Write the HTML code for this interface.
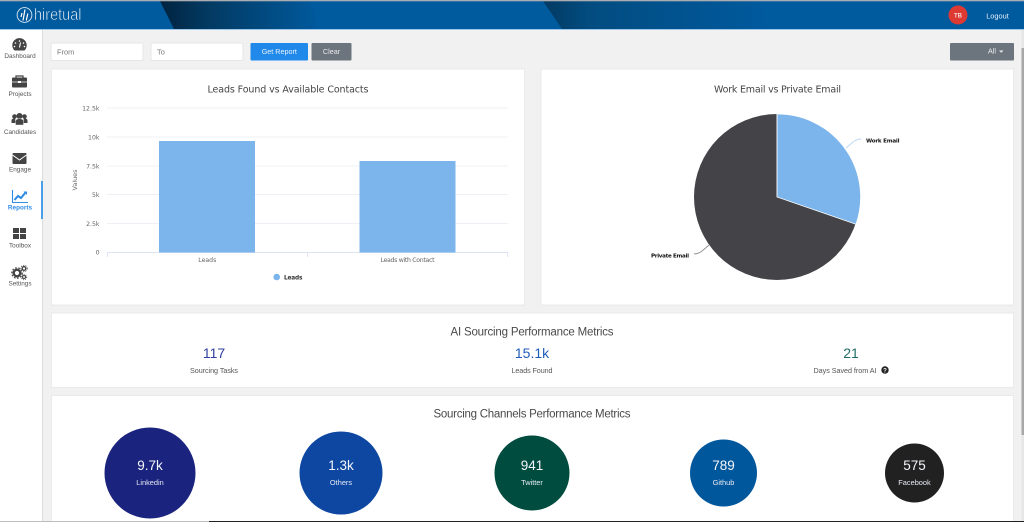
<!DOCTYPE html>
<html>
<head>
<meta charset="utf-8">
<title>Hiretual Reports</title>
<style>
html,body{margin:0;padding:0;width:1024px;height:522px;overflow:hidden;background:#f1f1f1}
svg{display:block;filter:blur(.38px)}
text{font-family:"Liberation Sans",sans-serif}
.d{font-family:"DejaVu Sans",sans-serif}
</style>
</head>
<body>
<svg width="1024" height="522" viewBox="0 0 1024 522" xmlns="http://www.w3.org/2000/svg">
<defs>
<linearGradient id="w1" x1="0" x2="1" y1="0" y2="0"><stop offset="0" stop-color="#01233f"/><stop offset=".3" stop-color="#023a62"/><stop offset="1" stop-color="#005a9e"/></linearGradient>
<linearGradient id="w2" x1="0" x2="1" y1="0" y2="0"><stop offset="0" stop-color="#033a62"/><stop offset=".2" stop-color="#024c80"/><stop offset="1" stop-color="#005a9e"/></linearGradient>
</defs>
<rect width="1024" height="522" fill="#f1f1f1"/>

<!-- header -->
<rect width="1024" height="29" fill="#005a9e"/>
<polygon points="160,1 310,1 320,29 174,29" fill="url(#w1)"/>
<polygon points="543,1 760,1 770,29 562,29" fill="url(#w2)"/>
<rect width="1024" height="1.3" fill="#a9adb1"/>
<rect y="29" width="1024" height="1" fill="#9cc6ea"/>
<circle cx="24.500" cy="15" r="7.400" fill="none" stroke="#dfeaf4" stroke-width=".9"/>
<path d="M25 9.500L23 20.500M27.800 13.500L26.300 20.500M22 13L21 17" fill="none" stroke="#fff" stroke-width="1.200"/>
<text x="34" y="20" font-size="17" fill="#f2f7fb" stroke="#005a9e" stroke-width=".55" paint-order="normal" textLength="47.500" lengthAdjust="spacingAndGlyphs">hiretual</text>
<circle cx="958" cy="15" r="9.500" fill="#dd3a33"/>
<text x="958" y="17.500" font-size="6" font-weight="bold" fill="#f7d9d7" text-anchor="middle">TB</text>
<text x="997.500" y="18.500" font-size="7.400" fill="#e8f0f7" text-anchor="middle">Logout</text>

<!-- sidebar -->
<rect x="0" y="30" width="42" height="492" fill="#fff"/>
<rect x="42" y="30" width="1" height="492" fill="#dcdcdc"/>
<rect x="41" y="181" width="2" height="38" fill="#4b9fe8"/>

<!-- dashboard -->
<path d="M14.500 50.500a7.200 7.200 0 1 1 10 0z" fill="#444"/>
<path d="M19.500 47.500L20.500 42.500" stroke="#fff" stroke-width="1.100"/>
<circle cx="19.500" cy="41" r=".8" fill="#fff"/><circle cx="15.500" cy="43" r=".8" fill="#fff"/><circle cx="23.500" cy="43" r=".8" fill="#fff"/><circle cx="14.500" cy="46.500" r=".8" fill="#fff"/><circle cx="24.500" cy="46.500" r=".8" fill="#fff"/>
<!-- briefcase -->
<path d="M13 77.500h13a1 1 0 0 1 1 1v8a1 1 0 0 1-1 1H13a1 1 0 0 1-1-1v-8a1 1 0 0 1 1-1z" fill="#444"/>
<path d="M16 77.500v-1.500h7v1.500" fill="none" stroke="#444" stroke-width="1.200"/>
<path d="M12 82h15" stroke="#fff" stroke-width=".7"/><rect x="18" y="81" width="3" height="2" fill="#fff"/>
<!-- users -->
<circle cx="19.500" cy="116" r="3" fill="#444"/><circle cx="14.500" cy="116.500" r="2.300" fill="#444"/><circle cx="24.500" cy="116.500" r="2.300" fill="#444"/>
<path d="M15.500 125v-3.500c0-2 2-2.800 4-2.800s4 .8 4 2.800v3.500z" fill="#444" stroke="#fff" stroke-width=".4"/>
<path d="M11.500 123v-2.500c0-1.500 1.300-2 3-2l.8.3v4.200zM27.500 123v-2.500c0-1.500-1.300-2-3-2l-.8.3v4.200z" fill="#444"/>
<!-- envelope -->
<rect x="12.500" y="153" width="14" height="11" rx="1" fill="#444"/>
<path d="M12.500 155l7 5 7-5" fill="none" stroke="#fff" stroke-width="1"/>
<!-- reports -->
<path d="M12.500 190v12.500h15.500" fill="none" stroke="#2e8ce6" stroke-width="1.100"/>
<path d="M14.500 200l3.500-4 3 2 4.500-5.500" fill="none" stroke="#2e8ce6" stroke-width="2"/>
<path d="M23.500 191.500h3.500v3.500z" fill="#2e8ce6"/>
<!-- toolbox -->
<rect x="13" y="228" width="6" height="5" fill="#444"/><rect x="20" y="228" width="6" height="5" fill="#444"/><rect x="13" y="234" width="6" height="5" fill="#444"/><rect x="20" y="234" width="6" height="5" fill="#444"/>
<!-- settings -->
<circle cx="17" cy="273" r="3.300" fill="none" stroke="#444" stroke-width="2.400"/>
<circle cx="17" cy="273" r="5.200" fill="none" stroke="#444" stroke-width="1.200" stroke-dasharray="1.700 1.500"/>
<circle cx="24" cy="268.500" r="1.800" fill="none" stroke="#444" stroke-width="1.300"/>
<circle cx="24" cy="268.500" r="3.200" fill="none" stroke="#444" stroke-width=".8" stroke-dasharray="1.200 1.100"/>
<circle cx="24" cy="277" r="1.500" fill="none" stroke="#444" stroke-width="1.100"/>
<circle cx="24" cy="277" r="2.700" fill="none" stroke="#444" stroke-width=".8" stroke-dasharray="1 1"/>

<g font-size="6.400" fill="#555" text-anchor="middle">
<text x="20" y="58">Dashboard</text>
<text x="20" y="96">Projects</text>
<text x="20" y="134">Candidates</text>
<text x="20" y="171.500">Engage</text>
<text x="20" y="209.500" fill="#2e8ce6" font-weight="bold">Reports</text>
<text x="20" y="247.500">Toolbox</text>
<text x="20" y="285.500">Settings</text>
</g>

<!-- filters -->
<rect x="51" y="43" width="92" height="17.500" rx="1.500" fill="#fff" stroke="#e6e6e6"/>
<text x="57" y="54.500" font-size="7.400" fill="#777">From</text>
<rect x="151" y="43" width="92" height="17.500" rx="1.500" fill="#fff" stroke="#e6e6e6"/>
<text x="157" y="54.500" font-size="7.400" fill="#777">To</text>
<rect x="250.500" y="43" width="57.500" height="17.500" rx="1" fill="#2189e9"/>
<text x="279.300" y="54" font-size="7.200" fill="#e9f3fd" text-anchor="middle">Get Report</text>
<rect x="311.500" y="43" width="40" height="17.500" rx="1" fill="#6c757d"/>
<text x="331.500" y="54" font-size="7.200" fill="#e8eaec" text-anchor="middle">Clear</text>
<rect x="950" y="43" width="64" height="17.500" rx="1" fill="#6c757d"/>
<text x="992" y="53.500" font-size="7.200" fill="#eceef0" text-anchor="middle">All</text>
<path d="M999 50.500h4.500l-2.250 2.300z" fill="#eceef0"/>

<!-- panels -->
<rect x="51.500" y="69" width="473" height="236" fill="#fff" stroke="#e6e6e6" stroke-width=".8"/>
<rect x="541" y="69" width="472.500" height="236" fill="#fff" stroke="#e6e6e6" stroke-width=".8"/>
<rect x="51.500" y="313" width="962" height="74.500" fill="#fff" stroke="#e6e6e6" stroke-width=".8"/>
<rect x="51.500" y="395.500" width="962" height="126" fill="#fff" stroke="#e6e6e6" stroke-width=".8"/>

<!-- bar chart -->
<text class="d" x="288" y="92.500" font-size="9.500" fill="#444" text-anchor="middle" textLength="161">Leads Found vs Available Contacts</text>
<g stroke="#eef0f5" stroke-width="1">
<path d="M107 108h401M107 137h401M107 166h401M107 194.500h401M107 223.500h401"/>
</g>
<path d="M107 252.500h401M107.300 252v5M307.500 252v5M507.700 252v5" stroke="#dde3f3" stroke-width="1" fill="none"/>
<rect x="159" y="141" width="96" height="111.500" fill="#7cb5ec"/>
<rect x="359.500" y="161" width="96" height="91.500" fill="#7cb5ec"/>
<g class="d" font-size="6.200" fill="#666" text-anchor="end">
<text class="d" x="99.500" y="110.500">12.5k</text>
<text class="d" x="99.500" y="139.500">10k</text>
<text class="d" x="99.500" y="168.500">7.5k</text>
<text class="d" x="99.500" y="197">5k</text>
<text class="d" x="99.500" y="226">2.5k</text>
<text class="d" x="99.500" y="254.500">0</text>
</g>
<text class="d" transform="translate(77 180) rotate(-90)" font-size="6.400" fill="#666" text-anchor="middle">Values</text>
<text class="d" x="207.300" y="262" font-size="6.200" fill="#666" text-anchor="middle">Leads</text>
<text class="d" x="407.500" y="262" font-size="6.200" fill="#666" text-anchor="middle" textLength="54">Leads with Contact</text>
<circle cx="276.700" cy="277" r="3.300" fill="#7cb5ec"/>
<text class="d" x="284" y="279.500" font-size="5.800" font-weight="bold" fill="#333" textLength="18.500">Leads</text>

<!-- pie -->
<text class="d" x="777.500" y="92.500" font-size="9.500" fill="#444" text-anchor="middle" textLength="127">Work Email vs Private Email</text>
<circle cx="777" cy="197" r="83" fill="#434348"/>
<path d="M777 197V114A83 83 0 0 1 856 224.300z" fill="#7cb5ec" stroke="#fff" stroke-width=".8"/>
<path d="M777 114V197" stroke="#fff" stroke-width=".6"/>
<path d="M846 148C852 143 855 139 861 139" fill="none" stroke="#b8d7f4" stroke-width=".9"/>
<path d="M709 245C703 250 700 254 694 254" fill="none" stroke="#8e8e92" stroke-width=".9"/>
<text class="d" x="866" y="142.500" font-size="5.600" font-weight="bold" fill="#111" textLength="33.500">Work Email</text>
<text class="d" x="651" y="257.500" font-size="5.600" font-weight="bold" fill="#111" textLength="38">Private Email</text>

<!-- AI metrics -->
<text x="532" y="335.500" font-size="11.500" fill="#4a4a4a" text-anchor="middle" textLength="163">AI Sourcing Performance Metrics</text>
<text x="214" y="358" font-size="14" fill="#303f9f" text-anchor="middle">117</text>
<text x="532" y="358" font-size="14" fill="#1e5bb8" text-anchor="middle">15.1k</text>
<text x="851" y="358" font-size="14" fill="#1f6f66" text-anchor="middle">21</text>
<text x="214" y="373" font-size="7.200" fill="#555" text-anchor="middle" textLength="48">Sourcing Tasks</text>
<text x="532" y="373" font-size="7.200" fill="#555" text-anchor="middle" textLength="41">Leads Found</text>
<text x="845" y="373" font-size="7.200" fill="#555" text-anchor="middle" textLength="63">Days Saved from AI</text>
<circle cx="885" cy="370" r="3.700" fill="#222"/>
<text x="885" y="372.500" font-size="6" font-weight="bold" fill="#fff" text-anchor="middle">?</text>

<!-- channels -->
<text x="532" y="417.500" font-size="11.500" fill="#4a4a4a" text-anchor="middle" textLength="197">Sourcing Channels Performance Metrics</text>
<circle cx="150" cy="473" r="45.500" fill="#1a237e"/>
<circle cx="341" cy="473" r="41.500" fill="#0d47a1"/>
<circle cx="532" cy="473" r="37.500" fill="#004d40"/>
<circle cx="723.500" cy="473" r="33.500" fill="#01579b"/>
<circle cx="914.500" cy="473" r="29.500" fill="#212121"/>
<g fill="#f4f6fb" text-anchor="middle" font-size="13.500">
<text x="150" y="470">9.7k</text>
<text x="341" y="470">1.3k</text>
<text x="532" y="470">941</text>
<text x="723.500" y="470">789</text>
<text x="914.500" y="470">575</text>
</g>
<g fill="#e8ebf5" text-anchor="middle" font-size="7.400">
<text x="150" y="485">Linkedin</text>
<text x="341" y="485">Others</text>
<text x="532" y="485">Twitter</text>
<text x="723.500" y="485">Github</text>
<text x="914.500" y="485">Facebook</text>
</g>

<!-- scrollbar & bottom edge -->
<rect x="1021.500" y="30" width="2.500" height="492" fill="#e6e6e6"/>
<rect x="1021.500" y="48" width="2.500" height="387" fill="#a8a8a8"/>
<rect x="0" y="521" width="209" height="1" fill="#bdbdbd"/>
<rect x="209" y="521" width="815" height="1" fill="#222"/>
</svg>
</body>
</html>
